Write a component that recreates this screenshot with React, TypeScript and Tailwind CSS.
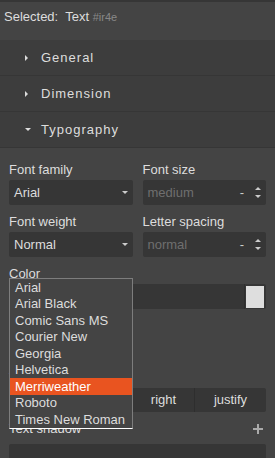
import type { ReactNode } from 'react';

const FONTS = [
  'Arial',
  'Arial Black',
  'Comic Sans MS',
  'Courier New',
  'Georgia',
  'Helvetica',
  'Merriweather',
  'Roboto',
  'Times New Roman',
];

const ALIGNS = ['left', 'center', 'right', 'justify'];

function Caret({ open }: { open?: boolean }) {
  if (open) {
    return (
      <span className="block h-0 w-0 border-x-[3px] border-t-[3px] border-x-transparent border-t-[#ddd]" />
    );
  }
  return (
    <span className="block h-0 w-0 border-y-[3px] border-l-[3.5px] border-y-transparent border-l-[#ddd]" />
  );
}

function SectorTitle({ title, open }: { title: string; open?: boolean }) {
  return (
    <div className="flex h-[36px] items-center border-b border-[#363636] bg-[#3d3d3d] pl-[25px] text-[13px] tracking-[1px] text-[#ddd]">
      <span className="flex w-[16px] justify-start">
        <Caret open={open} />
      </span>
      {title}
    </div>
  );
}

function Field({ label, children }: { label: string; children: ReactNode }) {
  return (
    <div className="flex flex-col">
      <div className="mb-[2px] h-[16px] text-[13px] leading-[16px] text-[#ddd]">{label}</div>
      {children}
    </div>
  );
}

function SelectBox({ value }: { value: string }) {
  return (
    <div className="flex h-[25px] items-center justify-between rounded-[2px] bg-[#363636] pl-[5px] pr-[5px] text-[13px] text-[#ddd]">
      <span>{value}</span>
      <span className="block h-0 w-0 border-x-[3px] border-t-[3px] border-x-transparent border-t-[#ccc]" />
    </div>
  );
}

function NumberBox({ placeholder }: { placeholder: string }) {
  return (
    <div className="flex h-[25px] items-center rounded-[2px] bg-[#363636] pl-[5px] pr-[5px] text-[13px]">
      <span className="flex-1 text-[#6f6f6f]">{placeholder}</span>
      <span className="mr-[11px] text-[#ccc]">-</span>
      <span className="flex flex-col items-center gap-[5px]">
        <span className="block h-0 w-0 border-x-[3.5px] border-b-[3px] border-x-transparent border-b-[#ccc]" />
        <span className="block h-0 w-0 border-x-[3.5px] border-t-[3px] border-x-transparent border-t-[#ccc]" />
      </span>
    </div>
  );
}

export default function App() {
  return (
    <div className="relative h-[458px] w-[275px] overflow-hidden bg-[#444] font-['Liberation_Sans',Arial,sans-serif] text-[#ddd]">
      <div className="h-[2px] bg-[#363636]" />
      <div className="h-[38px] px-[4px] pt-[7px] text-[13px] leading-[16px]">
        Selected:&nbsp; Text <span className="text-[11px] text-[#888]">#ir4e</span>
      </div>

      <SectorTitle title="General" />
      <SectorTitle title="Dimension" />
      <SectorTitle title="Typography" open />

      <div className="px-[9px] pt-[14px]">
        <div className="grid grid-cols-2 gap-x-[10px] gap-y-[9px]">
          <Field label="Font family">
            <SelectBox value="Arial" />
          </Field>
          <Field label="Font size">
            <NumberBox placeholder="medium" />
          </Field>
          <Field label="Font weight">
            <SelectBox value="Normal" />
          </Field>
          <Field label="Letter spacing">
            <NumberBox placeholder="normal" />
          </Field>
          <div className="col-span-2">
            <Field label="Color">
              <div className="flex h-[25px] items-center justify-end rounded-[2px] bg-[#363636] pr-[2px]">
                <div className="flex h-[25px] items-center border-l border-[#2e2e2e] pl-[1px]">
                  <div className="h-[22px] w-[18px] bg-[#dedede]" />
                </div>
              </div>
            </Field>
          </div>
          <Field label="Line height">
            <NumberBox placeholder="normal" />
          </Field>
          <div />
          <div className="col-span-2">
            <Field label="Text align">
              <div className="flex h-[24px] overflow-hidden rounded-[2px] bg-[#363636] text-[13px] text-[#ddd]">
                {ALIGNS.map((a, i) => (
                  <div
                    key={a}
                    className={
                      'flex items-center justify-center ' +
                      (i < 3 ? 'w-[62px] border-r border-[#2e2e2e]' : 'flex-1')
                    }
                  >
                    {a}
                  </div>
                ))}
              </div>
            </Field>
          </div>
          <div className="col-span-2">
            <div className="flex h-[16px] items-center justify-between text-[13px] leading-[16px]">
              <span>Text shadow</span>
              <svg width="12" height="12" viewBox="0 0 12 12" className="mr-[2px]">
                <path d="M6 1v10M1 6h10" stroke="#aaa" strokeWidth="2" />
              </svg>
            </div>
            <div className="mt-[7px] h-[40px] rounded-[2px] bg-[#363636]" />
          </div>
        </div>
      </div>

      <div className="absolute left-[9px] top-[278px] w-[124px] border border-[#7d7d7d] border-b-white bg-[#444] text-[13px]">
        {FONTS.map((f) => (
          <div
            key={f}
            className={
              'flex h-[16.5px] items-center pl-[5px] ' +
              (f === 'Merriweather' ? 'bg-[#e95420] text-white' : 'text-[#ddd]')
            }
          >
            {f}
          </div>
        ))}
      </div>
    </div>
  );
}
